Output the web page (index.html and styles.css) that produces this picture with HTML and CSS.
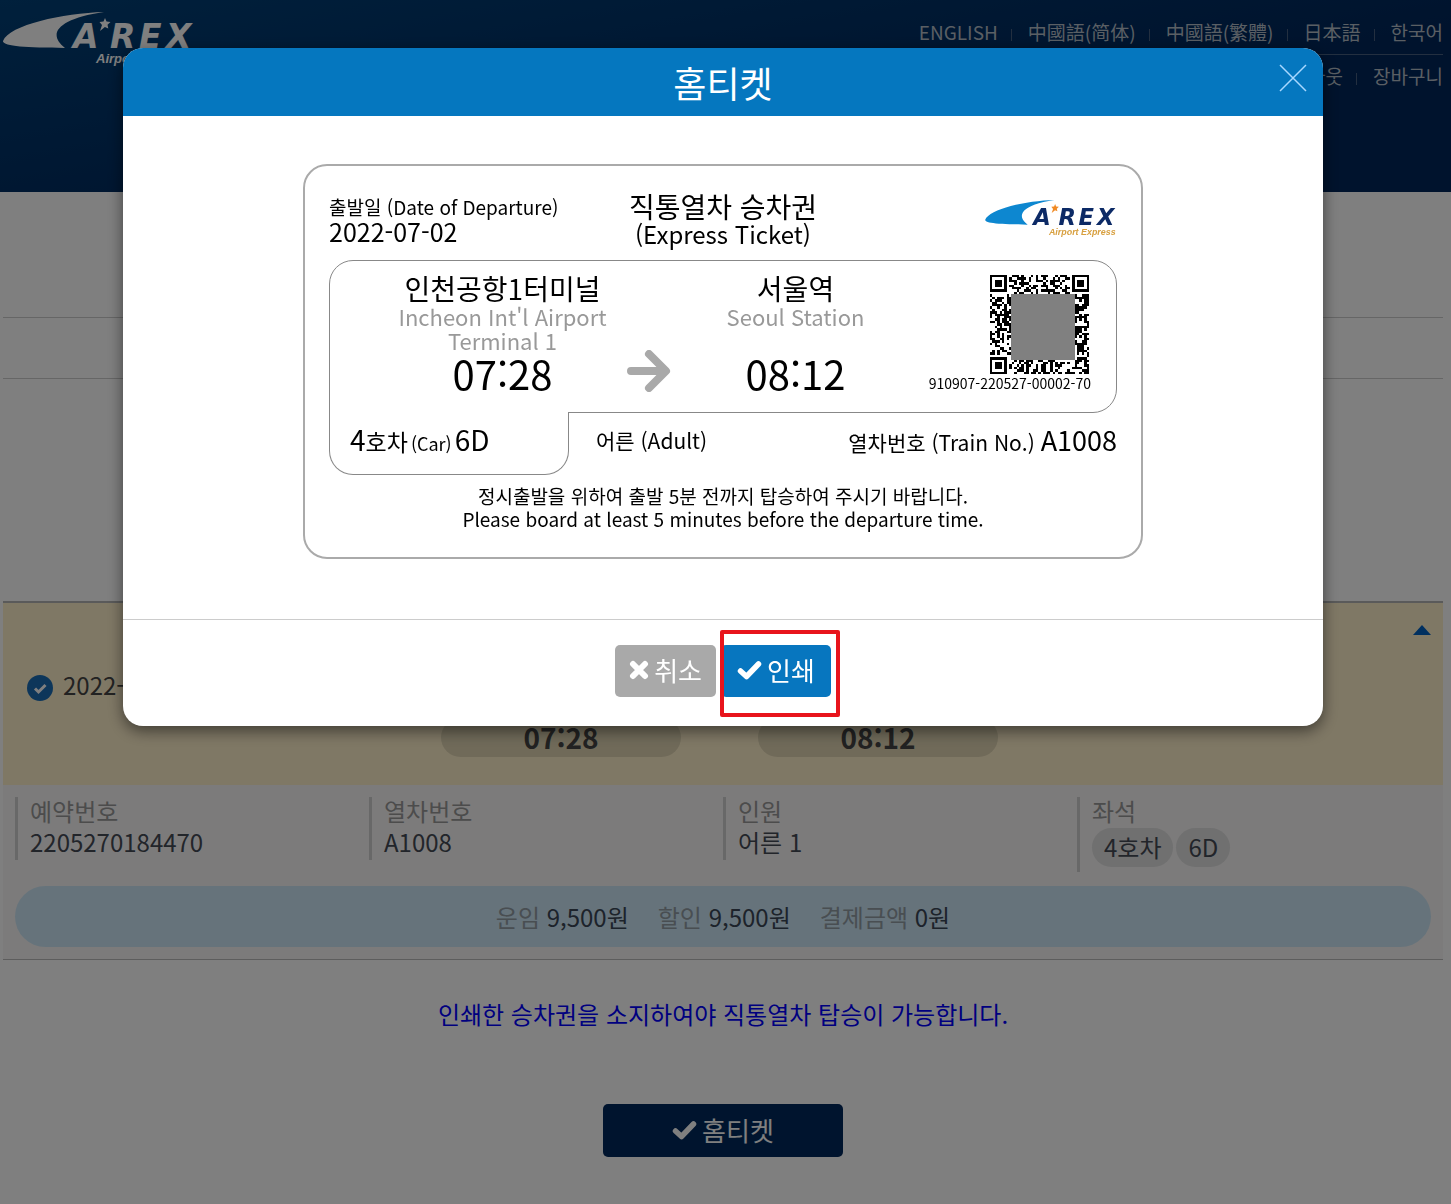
FILE: index.html
```html
<!DOCTYPE html>
<html lang="ko">
<head>
<meta charset="utf-8">
<meta name="viewport" content="width=device-width, initial-scale=1">
<title>AREX 홈티켓</title>
<link rel="stylesheet" href="styles.css">
</head>
<body>
<svg class="sprite" aria-hidden="true">
  <symbol id="arex" viewBox="0 0 192 54">
    <path class="logo-wing" d="M101 0C60 1 6 13 0 29C-1 34 22 36 62 36C44 22 54 7 101 0Z"/>
    <text class="logo-name" y="36" x="70 107 136 163">AREX</text>
    <path class="logo-star" d="M102 6l1.500 3.600 4 .4-3 2.700 .8 3.900-3.400-1.700-4.900 4.100 2-6-2.500-3 4-.4z"/>
    <text class="logo-tag" x="93" y="51">Airport Express</text>
  </symbol>
  <symbol id="check" viewBox="0 0 25 20">
    <path d="M3.500 11L9.500 16.500L21.500 4" fill="none" stroke="currentColor" stroke-width="5.500" stroke-linejoin="round" stroke-linecap="round"/>
  </symbol>
</svg>

<header class="site-header">
  <a href="#" aria-label="AREX"><svg class="logo logo-site"><use href="#arex"/></svg></a>
  <div class="menus">
    <nav class="menu">
      <a href="#">ENGLISH</a><a href="#" lang="zh-Hans">中國語(简体)</a><a href="#" lang="zh-Hant">中國語(繁體)</a><a href="#" lang="ja">日本語</a><a href="#">한국어</a>
    </nav>
    <nav class="menu menu-user">
      <a href="#">로그아웃</a><a href="#">장바구니</a>
    </nav>
  </div>
</header>

<main class="page">
  <div class="page-title"></div>
  <div class="page-steps"></div>
  <section class="booking">
    <div class="summary">
      <div class="date">
        <svg class="tick" viewBox="0 0 26 26"><circle cx="13" cy="13" r="13"/><path d="M8 13.500l3.500 3.500 7-7"/></svg>
        <span>2022-07-02</span>
      </div>
      <span class="time-pill">07:28</span>
      <span class="time-pill">08:12</span>
      <button class="toggle" type="button" aria-label="접기"><svg viewBox="0 0 18 10"><path d="M0 10L9 0L18 10Z"/></svg></button>
    </div>
    <div class="details">
      <dl class="facts">
        <div><dt>예약번호</dt><dd>2205270184470</dd></div>
        <div><dt>열차번호</dt><dd>A1008</dd></div>
        <div><dt>인원</dt><dd>어른 1</dd></div>
        <div><dt>좌석</dt><dd class="seats"><span>4호차</span><span>6D</span></dd></div>
      </dl>
      <p class="cost"><span>운임 <b>9,500원</b></span><span>할인 <b>9,500원</b></span><span>결제금액 <b>0원</b></span></p>
    </div>
  </section>
  <p class="notice">인쇄한 승차권을 소지하여야 직통열차 탑승이 가능합니다.</p>
  <button class="btn btn-home" type="button"><svg class="icon-check"><use href="#check"/></svg>홈티켓</button>
</main>

<div class="overlay">
  <section class="modal" role="dialog" aria-modal="true" aria-labelledby="modal-title">
    <header class="modal-head">
      <h1 id="modal-title">홈티켓</h1>
      <button class="close" type="button" aria-label="닫기"><svg viewBox="0 0 26 26"><path d="M0 0L26 26M26 0L0 26"/></svg></button>
    </header>
    <div class="modal-body">
      <article class="ticket">
        <div class="ticket-head">
          <p class="departure">출발일 (Date of Departure)<strong>2022-07-02</strong></p>
          <h2>직통열차 승차권<small>(Express Ticket)</small></h2>
          <svg class="logo logo-ticket" role="img" aria-label="AREX Airport Express"><use href="#arex"/></svg>
        </div>
        <div class="route">
          <div class="station"><h3>인천공항1터미널</h3><p>Incheon Int'l Airport Terminal 1</p><time>07:28</time></div>
          <svg class="arrow" viewBox="0 0 44 42"><path d="M4 21H38M22 4L39 21L22 38"/></svg>
          <div class="station"><h3>서울역</h3><p>Seoul Station</p><time>08:12</time></div>
          <div class="code">
            <svg class="qr" id="qr" viewBox="0 0 41 41" shape-rendering="crispEdges"><path/><rect x="8.500" y="8" width="26.500" height="27"/></svg>
            <span>910907-220527-00002-70</span>
          </div>
        </div>
        <div class="seat-row">
          <p class="seat"><b>4</b><span>호차</span><small>(Car)</small><b>6D</b></p>
          <p class="fare-type">어른 (Adult)</p>
          <p class="train">열차번호 (Train No.) <b>A1008</b></p>
        </div>
        <p class="boarding">정시출발을 위하여 출발 5분 전까지 탑승하여 주시기 바랍니다.<span>Please board at least 5 minutes before the departure time.</span></p>
      </article>
    </div>
    <footer class="modal-foot">
      <button class="btn btn-cancel" type="button"><svg class="icon-x" viewBox="0 0 20 20"><path d="M4 4L16 16M16 4L4 16"/></svg>취소</button>
      <span class="highlight"><button class="btn btn-print" type="button"><svg class="icon-check"><use href="#check"/></svg>인쇄</button></span>
    </footer>
  </section>
</div>
<script src="qr.js"></script>
</body>
</html>
```
FILE: styles.css
```css
* { box-sizing: border-box; }

body {
  margin: 0;
  background: #fff;
  color: #000;
  font-family: "Noto Sans CJK KR", "Noto Sans", sans-serif;
  font-size: 24px;
  line-height: 32px;
}

h1, h2, h3, p, dl, dd { margin: 0; font-weight: 400; }
a { color: inherit; text-decoration: none; }
button { font: inherit; border: 0; padding: 0; cursor: pointer; background: none; }
svg { display: block; }
small, strong, b { font-weight: inherit; }
.sprite { position: absolute; width: 0; height: 0; }

/* Logo */
.logo-wing { fill: var(--wing); }
.logo-star { fill: var(--star); }
.logo-name { fill: var(--name); font: italic bold 33px "DejaVu Sans", sans-serif; }
.logo-tag { fill: var(--tag); font: italic bold 13px "Liberation Sans", sans-serif; }
.logo-site { --wing: #fff; --star: #fff; --name: #fff; --tag: #fff; width: 192px; height: 54px; }
.logo-ticket { --wing: #0d87d0; --star: #f08a24; --name: #0c2a66; --tag: #d8a040; width: 132px; height: 37px; }

/* Header */
.site-header {
  display: flex;
  justify-content: space-between;
  align-items: flex-start;
  height: 192px;
  padding: 12px 8px 0 3px;
  background: linear-gradient(170deg, #004078, #00265a 65%);
}
.menu {
  display: flex;
  justify-content: flex-end;
  height: 42px;
  padding-top: 4px;
  color: #b4bec8;
  font-size: 19px;
}
.menu-user { border-top: 1px solid #465f80; padding-top: 5px; }
.menu a { display: flex; align-items: center; height: 32px; }
.menu a + a::before {
  content: "";
  width: 1px;
  height: 12px;
  margin: 6px 16px 0 13px;
  background: #465f80;
}

/* Booking page */
.page { padding: 0 8px 46px 3px; }
.page-title { height: 126px; border-bottom: 1px solid #ccc; }
.page-steps { height: 61px; border-bottom: 1px solid #ccc; margin-bottom: 222px; }
.booking { border-top: 2px solid #b4b4b4; border-bottom: 1px solid #bbb; background: #f8f6f6; }
.summary {
  display: grid;
  grid-template-columns: 1fr 240px 240px 1fr;
  column-gap: 77px;
  height: 182px;
  padding: 0 7px 28px 0;
  background: #fff0cb;
}
.date { display: flex; align-items: center; gap: 10px; padding: 9px 0 0 24px; color: #444; white-space: nowrap; }
.tick { flex: none; width: 26px; height: 26px; margin-top: 6px; }
.tick circle { fill: #1b6db5; }
.tick path { fill: none; stroke: #fff; stroke-width: 3; }
.time-pill {
  align-self: end;
  height: 39px;
  border-radius: 20px;
  background: #e0d5b3;
  color: #444;
  font-size: 28px;
  font-weight: 700;
  line-height: 38px;
  text-align: center;
}
.toggle { justify-self: end; align-self: start; margin: 22px 5px 0 0; }
.toggle svg { width: 18px; height: 10px; fill: #0060c0; }
.details { padding: 12px; }
.facts { display: grid; grid-template-columns: repeat(4, 1fr); align-items: start; }
.facts div { border-left: 3px solid #d0d0d0; padding-left: 12px; }
.facts dt { height: 31px; color: #999; line-height: 28px; }
.facts dd { height: 32px; color: #444a55; line-height: 28px; }
.facts .seats { display: flex; gap: 3px; height: 44px; }
.seats span { height: 39px; padding: 0 12px; border-radius: 20px; background: #e0e0e0; line-height: 38px; }
.cost {
  display: flex;
  justify-content: center;
  gap: 29px;
  margin-top: 14px;
  border-radius: 31px;
  background: #cce7f7;
  color: #929ca4;
  line-height: 61px;
}
.cost b { color: #3a4656; }
.notice { margin: 38px 0 74px; color: #00f; text-align: center; }

/* Buttons */
.btn {
  display: flex;
  align-items: center;
  justify-content: center;
  height: 52px;
  padding-bottom: 2px;
  border-radius: 5px;
  color: #fff;
  font-size: 26px;
  gap: 5px;
}
.icon-check { width: 25px; height: 20px; }
.icon-x { width: 20px; height: 20px; fill: none; stroke: currentColor; stroke-width: 6; stroke-linecap: round; }
.btn-home { width: 240px; height: 53px; margin: 0 auto; background: #00285c; }
.btn-cancel { padding-inline: 14px; background: #a9a9a9; }
.btn-print { padding-inline: 16px; background: #0776bf; }

/* Modal */
.overlay {
  position: fixed;
  inset: 0;
  overflow: auto;
  padding: 48px 5px 0 0;
  background: rgba(0, 0, 0, .5);
}
.modal {
  max-width: 1200px;
  margin: 0 auto;
  border-radius: 20px;
  overflow: hidden;
  background: #fff;
  box-shadow: 0 5px 15px rgba(0, 0, 0, .5);
}
.modal-head {
  display: grid;
  grid-template-columns: 1fr auto 1fr;
  background: #0577bf;
  color: #fff;
}
.modal-head h1 { grid-column: 2; font-size: 36px; line-height: 68px; }
.close { justify-self: end; align-self: start; margin: 17px 17px 0 0; }
.close svg { width: 26px; height: 26px; overflow: visible; stroke: #a8d8ff; stroke-width: 1.5; }
.modal-body { padding: 48px 20px 60px; }
.modal-foot {
  display: flex;
  justify-content: center;
  gap: 5px;
  padding: 25px 0 29px;
  border-top: 1px solid #ccc;
}
.highlight { position: relative; }
.highlight::after {
  content: "";
  position: absolute;
  inset: -15px -9px -20px -1px;
  border: 4px solid #e8141c;
  border-radius: 2px;
  pointer-events: none;
}

/* Ticket */
.ticket {
  max-width: 840px;
  min-height: 395px;
  margin: 0 auto;
  padding: 24px;
  border: 2px solid #aaa;
  border-radius: 24px;
}
.ticket-head { display: grid; grid-template-columns: 1fr auto 1fr; height: 70px; }
.departure { padding-top: 4px; font-size: 19px; line-height: 25px; }
.departure strong { display: block; font-size: 25px; line-height: 24px; }
.ticket-head h2 { font-size: 28px; line-height: 32px; text-align: center; }
.ticket-head small { display: block; font-size: 24px; line-height: 24px; }
.logo-ticket { justify-self: end; margin-top: 10px; }
.route {
  display: grid;
  grid-template-columns: 1fr 44px 1fr 171px;
  height: 153px;
  padding: 11px 25px 0 48px;
  border: 1px solid #888;
  border-radius: 24px 24px 24px 0;
}
.station { text-align: center; }
.station h3 { font-size: 28px; line-height: 32px; }
.station p { height: 48px; padding: 0 16px; color: #999; font-size: 22px; line-height: 24px; }
.station time { display: block; font-size: 40px; line-height: 42px; }
.arrow { width: 44px; height: 42px; margin-top: 78px; fill: none; stroke: #a9a9a9; stroke-width: 8; stroke-linecap: round; stroke-linejoin: round; }
.code { display: flex; flex-direction: column; align-items: flex-end; padding-top: 3px; font-size: 14px; line-height: 19px; }
.qr { width: 99px; height: 99px; margin-right: 2px; }
.qr rect { fill: #808080; }
.seat-row { display: flex; margin-top: -1px; font-size: 21px; line-height: 56px; }
.seat {
  display: flex;
  align-items: baseline;
  width: 240px;
  height: 63px;
  padding-left: 20px;
  border: 1px solid #888;
  border-top: 0;
  border-radius: 0 0 24px 24px;
  background: #fff;
  line-height: 54px;
}
.seat b { font-size: 28px; }
.seat span { font-size: 23px; }
.seat small { margin: 0 3px; font-size: 18px; }
.fare-type { padding-left: 27px; }
.train { margin-left: auto; }
.train b { font-size: 27px; }
.boarding { padding-top: 9px; font-size: 19px; line-height: 23px; text-align: center; }
.boarding span { display: block; }
```
FILE: qr.js
```js
// Draws the ticket's code: three finder squares and the data modules around them.
(function () {
  var size = 41, seed = 910907, d = "";
  function bit() {
    seed = (seed * 1103515245 + 12345) % 2147483648;
    return (seed >> 16) & 1;
  }
  function finder(x, y) {
    var edge = Math.max(Math.abs(x - 3), Math.abs(y - 3));
    return edge === 3 || edge < 2;
  }
  for (var y = 0; y < size; y++) {
    for (var x = 0; x < size; x++) {
      var on = bit(), left = x < 8, right = x > 32, top = y < 8, bottom = y > 32;
      if (left && top) on = x < 7 && y < 7 && finder(x, y);
      else if (right && top) on = x > 33 && y < 7 && finder(x - 34, y);
      else if (left && bottom) on = x < 7 && y > 33 && finder(x, y - 34);
      if (on) d += "M" + x + " " + y + "h1v1h-1z";
    }
  }
  document.querySelector("#qr path").setAttribute("d", d);
})();
```
